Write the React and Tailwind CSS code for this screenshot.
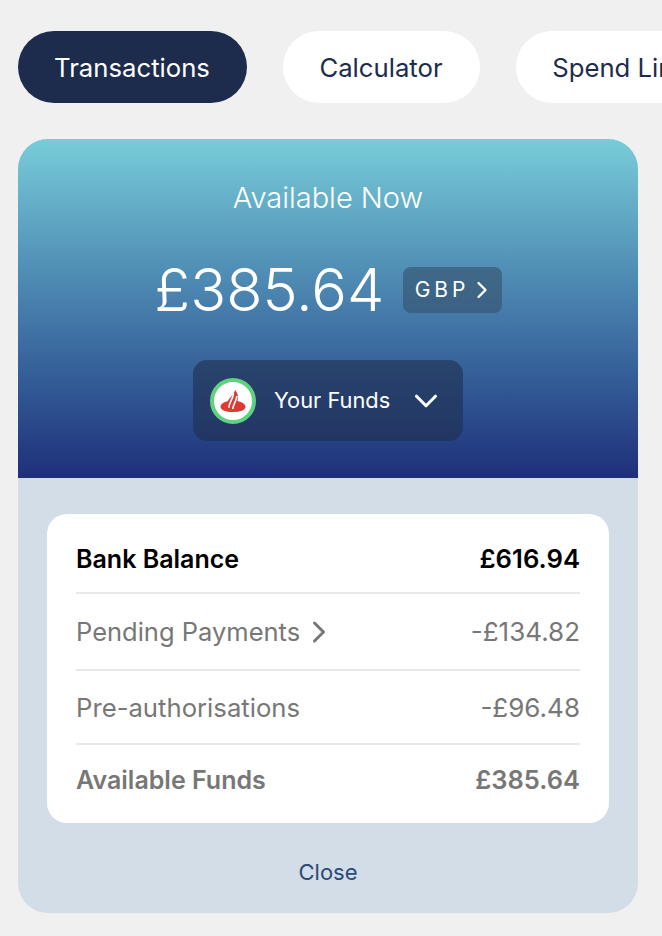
import { ChevronRight, ChevronDown } from 'lucide-react';

const font = { fontFamily: 'Inter, sans-serif' };

const Tab = ({ label, active, width }) => (
    <div
        className={`shrink-0 h-[72px] rounded-[36px] flex items-center justify-center pt-[1px] pr-[1px] text-[25.7px] leading-none ${width} ${
            active ? 'bg-[#1d2b4c] text-white' : 'bg-white text-[#1d2b4c]'
        }`}
    >
        {label}
    </div>
);

const SantanderLogo = () => (
    <div className="w-[46px] h-[46px] rounded-full bg-white border-[4px] border-[#5fd27d] flex items-center justify-center shrink-0">
        <svg width="26" height="22" viewBox="0 0 26 22">
            <path
                d="M8 11C9 8 14 5 15 0C18 3 18.500 7 17.500 11C22 12 25.500 14 25.500 17C25.500 20 20 22 13 22C6 22 .5 20 .5 17C.5 14 4 12 8 11Z"
                fill="#dc3a35"
            />
            <path d="M8.800 17.700C9 12.500 13 9 13.500 3.500M12.800 19C13 14 16.500 11.500 16.800 6" stroke="#ffffff" strokeWidth="1.600" fill="none" />
        </svg>
    </div>
);

const Row = ({ label, value, className, labelSize, valueSize, children }) => (
    <div className={`flex items-center justify-between leading-none ${className}`}>
        <div className={`flex items-center ${labelSize}`}>
            {label}
            {children}
        </div>
        <span className={valueSize}>{value}</span>
    </div>
);

export default function App() {
    return (
        <div className="w-[662px] h-[936px] bg-[#f0f0f0] overflow-hidden pt-[31px] pl-[18px]" style={font}>
            <div className="flex gap-[36px] w-[644px] overflow-hidden">
                <Tab label="Transactions" active width="w-[229px]" />
                <Tab label="Calculator" width="w-[197px]" />
                <Tab label="Spend Limits" width="w-[230px]" />
            </div>

            <div className="mt-[36px] w-[620px] h-[774px] rounded-[30px] overflow-hidden bg-[#d3dde8] flex flex-col">
                <div className="h-[339px] shrink-0 bg-gradient-to-b from-[#78cdd9] to-[#1f2f7a] flex flex-col items-center text-white">
                    <div className="mt-[44px] text-[29px] leading-none font-light">Available Now</div>
                    <div className="mt-[48px] flex items-center gap-[18.5px]">
                        <span className="text-[59.3px] leading-none font-light">£385.64</span>
                        <div className="w-[99px] h-[46px] rounded-[8px] bg-[#35506a]/60 flex items-center pl-[12px] text-[21px] tracking-[4px]">
                            GBP
                            <ChevronRight className="ml-[-2px]" size={28} strokeWidth={2} />
                        </div>
                    </div>
                    <div className="mt-[41px] w-[270px] h-[81px] rounded-[14px] bg-[#1f2f4f]/60 flex items-center pl-[17px]">
                        <SantanderLogo />
                        <span className="ml-[18px] text-[21.8px] leading-none">Your Funds</span>
                        <ChevronDown className="ml-[17px]" size={38} strokeWidth={2} />
                    </div>
                </div>

                <div className="mt-[36px] mx-[29px] h-[309px] rounded-[20px] bg-white px-[29px] flex flex-col">
                    <Row label="Bank Balance" value="£616.94" labelSize="text-[25px]" valueSize="text-[25.7px]" className="h-[80px] pt-[12px] font-semibold text-black border-b-2 border-[#e6e8ea]" />
                    <Row label="Pending Payments" value="-£134.82" labelSize="text-[25.5px]" valueSize="text-[26px]" className="h-[77px] text-[#777777] border-b-2 border-[#e6e8ea]">
                        <ChevronRight className="ml-[1px]" size={36} strokeWidth={2} />
                    </Row>
                    <Row label="Pre-authorisations" value="-£96.48" labelSize="text-[25.7px]" valueSize="text-[26px]" className="h-[74px] pt-[2px] text-[#777777] border-b-2 border-[#e6e8ea]" />
                    <Row label="Available Funds" value="£385.64" labelSize="text-[25px]" valueSize="text-[25.5px]" className="h-[71px] pb-[1px] font-semibold text-[#777777]" />
                </div>

                <div className="mt-[38px] text-center text-[22px] leading-none text-[#2b4a75]">Close</div>
            </div>
        </div>
    );
}
